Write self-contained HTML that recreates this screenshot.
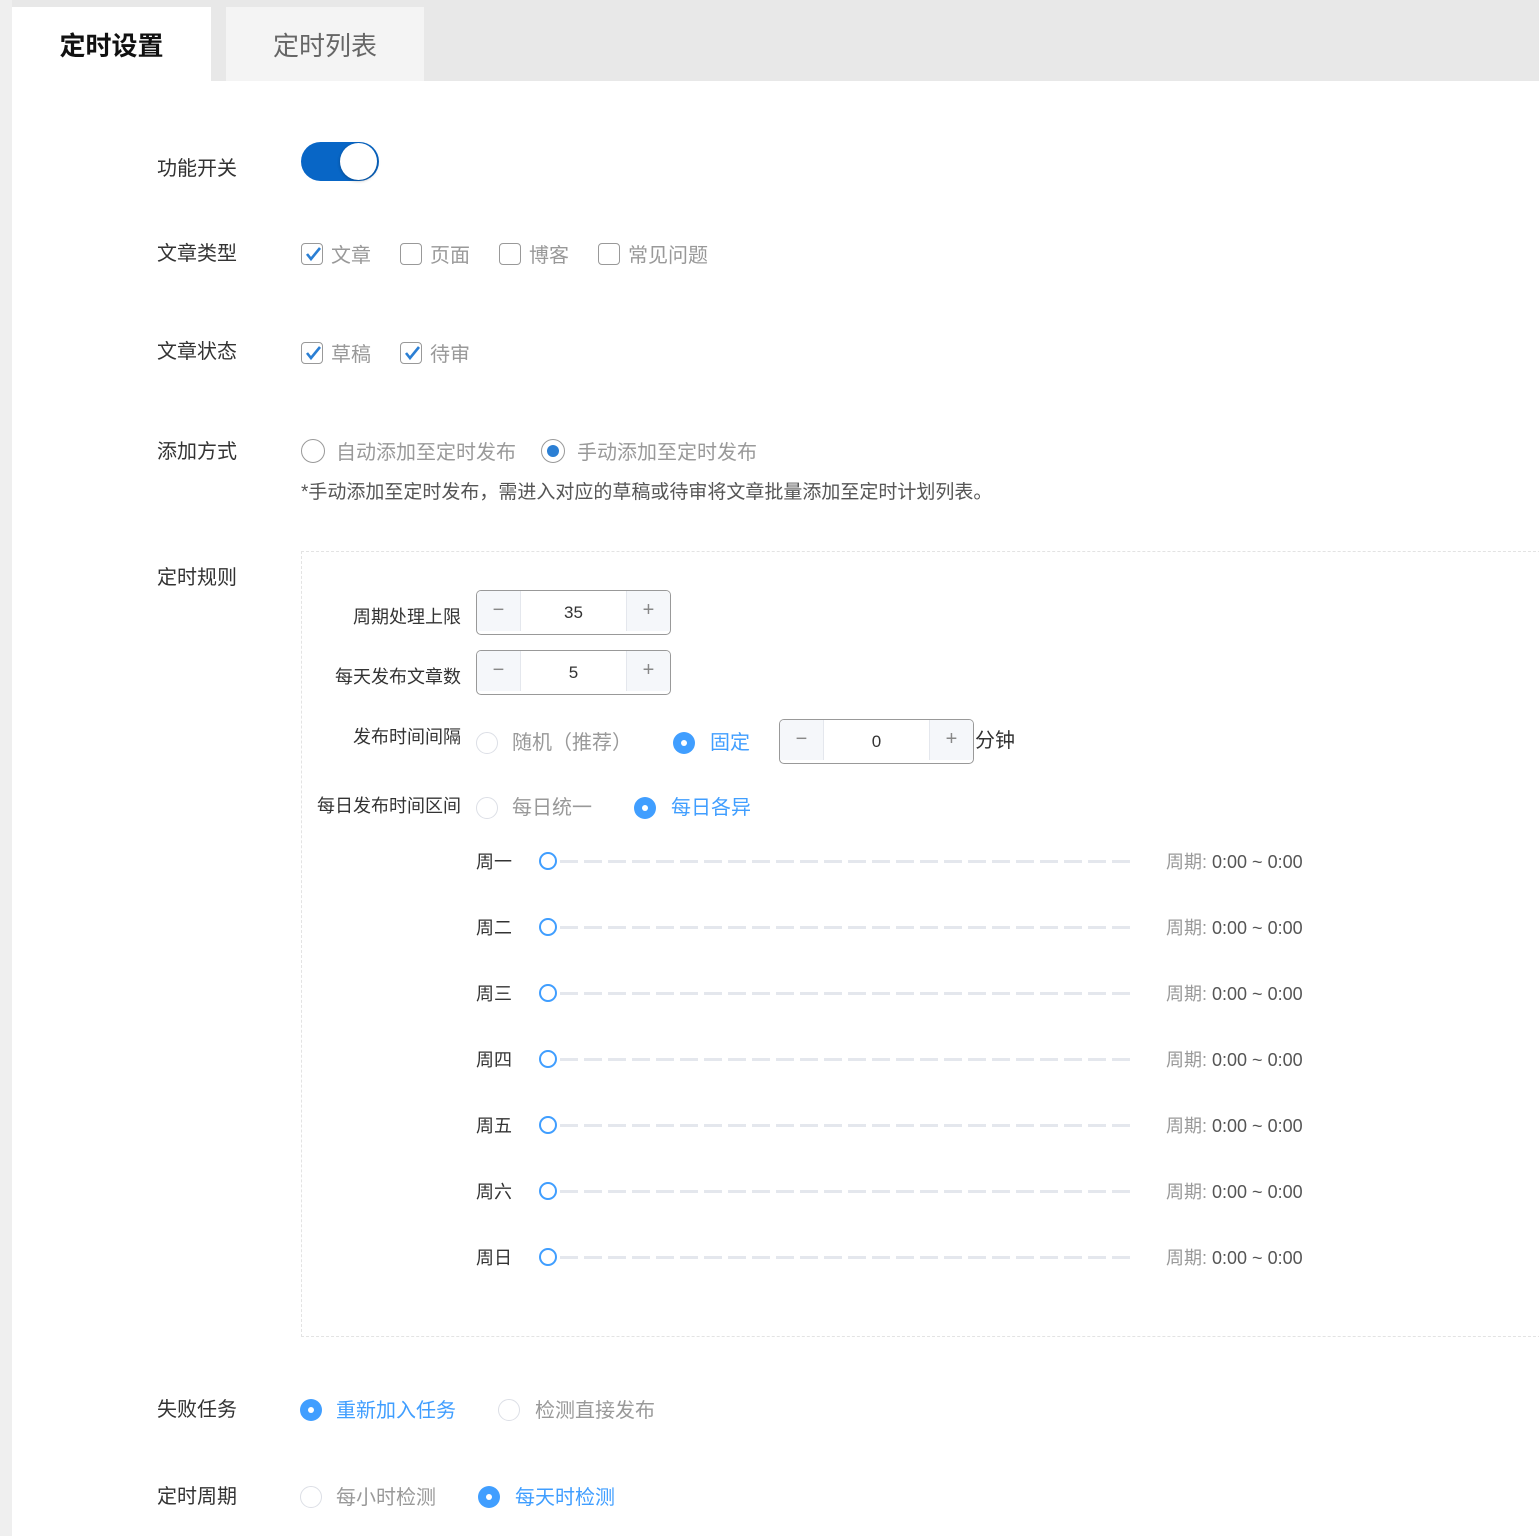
<!DOCTYPE html>
<html><head><meta charset="utf-8"><style>
*{margin:0;padding:0;box-sizing:border-box}
body{width:1539px;height:1536px;position:relative;background:#fff;font-family:"Liberation Sans","Noto Sans CJK SC",sans-serif;overflow:hidden;color:#333}
.a{position:absolute;white-space:nowrap}
.t{position:absolute;white-space:nowrap;height:30px;line-height:30px;margin-top:1px}
.lb{font-size:20px;color:#333;left:157px}
.cb{position:absolute;width:22px;height:22px;border:1.5px solid #999;border-radius:4px;background:#fff}
.g{color:#999;font-size:20px}
.bl{color:#409eff;font-size:20px}
.rd{position:absolute;width:22px;height:22px;border-radius:50%;border:1px solid #dcdfe6;background:#fff}
.rf{position:absolute;width:22px;height:22px;border-radius:50%;background:#409eff}
.rf:after{content:"";position:absolute;left:8px;top:8px;width:6px;height:6px;border-radius:50%;background:#fff}
.num{position:absolute;width:195px;height:45px;border:1.5px solid #999;border-radius:5px;background:#fff;overflow:hidden}
.num .m,.num .p{position:absolute;top:0;width:44px;height:40px;background:#f5f7fa;color:#888;font-size:20px;text-align:center;line-height:38px}
.num .m{left:0;border-right:1px solid #e4e7ed}.num .p{right:0;border-left:1px solid #e4e7ed}
.num .v{position:absolute;left:44px;right:44px;top:0;height:42px;line-height:44px;text-align:center;font-size:17px;color:#333}
.il{font-size:18px;color:#333;text-align:right;right:1078px}
.day{position:absolute;left:476px;font-size:18px;color:#333;height:24px;line-height:26px}
.dot{position:absolute;left:539px;width:18px;height:18px;border:2.5px solid #409eff;border-radius:50%;background:#fff}
.dash{position:absolute;left:560px;width:576px;height:3px;background:repeating-linear-gradient(90deg,#e4e7ed 0 18px,transparent 18px 24px)}
.per{position:absolute;left:1166px;font-size:18px;color:#999;height:24px;line-height:26px}
.per span{color:#555}
</style></head><body>
<div class="a" style="left:0;top:0;width:1539px;height:81px;background:#e8e8e8"></div>
<div class="a" style="left:0;top:0;width:12px;height:1536px;background:#efefef"></div>
<div class="a" style="left:12px;top:7px;width:199px;height:75px;background:#fff;font-size:26px;font-weight:bold;color:#111;text-align:center;line-height:78px">定时设置</div>
<div class="a" style="left:226px;top:7px;width:198px;height:74px;background:#f4f4f4;font-size:26px;color:#666;text-align:center;line-height:78px">定时列表</div>

<div class="t lb" style="top:153px">功能开关</div>
<div class="a" style="left:301px;top:142px;width:78px;height:39px;border-radius:20px;background:#0866c6"></div>
<div class="a" style="left:340px;top:143px;width:37px;height:37px;border-radius:50%;background:#fff;box-shadow:0 1px 3px rgba(0,0,0,.3)"></div>

<div class="t lb" style="top:238px">文章类型</div>
<div class="cb" style="left:301px;top:243px"></div>
<svg class="a" style="left:303px;top:244px" width="20" height="20"><path d="M4 10 L8 15 L17 4" stroke="#2b7fd4" stroke-width="2.6" fill="none"/></svg>
<div class="t g" style="left:331px;top:240px">文章</div>
<div class="cb" style="left:400px;top:243px"></div><div class="t g" style="left:430px;top:240px">页面</div>
<div class="cb" style="left:499px;top:243px"></div><div class="t g" style="left:529px;top:240px">博客</div>
<div class="cb" style="left:598px;top:243px"></div><div class="t g" style="left:628px;top:240px">常见问题</div>

<div class="t lb" style="top:336px">文章状态</div>
<div class="cb" style="left:301px;top:342px"></div>
<svg class="a" style="left:303px;top:343px" width="20" height="20"><path d="M4 10 L8 15 L17 4" stroke="#2b7fd4" stroke-width="2.6" fill="none"/></svg>
<div class="t g" style="left:331px;top:339px">草稿</div>
<div class="cb" style="left:400px;top:342px"></div>
<svg class="a" style="left:402px;top:343px" width="20" height="20"><path d="M4 10 L8 15 L17 4" stroke="#2b7fd4" stroke-width="2.6" fill="none"/></svg>
<div class="t g" style="left:430px;top:339px">待审</div>

<div class="t lb" style="top:436px">添加方式</div>
<div class="a" style="left:301px;top:439px;width:24px;height:24px;border-radius:50%;border:1.5px solid #999"></div>
<div class="t g" style="left:336px;top:437px">自动添加至定时发布</div>
<div class="a" style="left:541px;top:439px;width:24px;height:24px;border-radius:50%;border:1.5px solid #999"></div>
<div class="a" style="left:547px;top:445px;width:12px;height:12px;border-radius:50%;background:#2b7fd4"></div>
<div class="t g" style="left:577px;top:437px">手动添加至定时发布</div>
<div class="t" style="left:301px;top:477px;font-size:19px;color:#555">*手动添加至定时发布，需进入对应的草稿或待审将文章批量添加至定时计划列表。</div>

<div class="t lb" style="top:562px">定时规则</div>
<div class="a" style="left:301px;top:551px;width:1250px;height:786px;border:1px dashed #e3e3e3"></div>

<div class="t il" style="top:601px">周期处理上限</div>
<div class="num" style="left:476px;top:590px"><div class="m">−</div><div class="v">35</div><div class="p">+</div></div>
<div class="t il" style="top:661px">每天发布文章数</div>
<div class="num" style="left:476px;top:650px"><div class="m">−</div><div class="v">5</div><div class="p">+</div></div>

<div class="t il" style="top:721px">发布时间间隔</div>
<div class="rd" style="left:476px;top:732px"></div>
<div class="t g" style="left:512px;top:727px">随机（推荐）</div>
<div class="rf" style="left:673px;top:732px"></div>
<div class="t bl" style="left:710px;top:727px">固定</div>
<div class="num" style="left:779px;top:719px"><div class="m">−</div><div class="v">0</div><div class="p">+</div></div>
<div class="t" style="left:975px;top:725px;font-size:20px;color:#333">分钟</div>

<div class="t il" style="top:790px">每日发布时间区间</div>
<div class="rd" style="left:476px;top:797px"></div>
<div class="t g" style="left:512px;top:792px">每日统一</div>
<div class="rf" style="left:634px;top:797px"></div>
<div class="t bl" style="left:671px;top:792px">每日各异</div>

<div class="day" style="top:849px">周一</div><div class="dash" style="top:860px"></div><div class="dot" style="top:852px"></div><div class="per" style="top:849px">周期: <span>0:00 ~ 0:00</span></div>
<div class="day" style="top:915px">周二</div><div class="dash" style="top:926px"></div><div class="dot" style="top:918px"></div><div class="per" style="top:915px">周期: <span>0:00 ~ 0:00</span></div>
<div class="day" style="top:981px">周三</div><div class="dash" style="top:992px"></div><div class="dot" style="top:984px"></div><div class="per" style="top:981px">周期: <span>0:00 ~ 0:00</span></div>
<div class="day" style="top:1047px">周四</div><div class="dash" style="top:1058px"></div><div class="dot" style="top:1050px"></div><div class="per" style="top:1047px">周期: <span>0:00 ~ 0:00</span></div>
<div class="day" style="top:1113px">周五</div><div class="dash" style="top:1124px"></div><div class="dot" style="top:1116px"></div><div class="per" style="top:1113px">周期: <span>0:00 ~ 0:00</span></div>
<div class="day" style="top:1179px">周六</div><div class="dash" style="top:1190px"></div><div class="dot" style="top:1182px"></div><div class="per" style="top:1179px">周期: <span>0:00 ~ 0:00</span></div>
<div class="day" style="top:1245px">周日</div><div class="dash" style="top:1256px"></div><div class="dot" style="top:1248px"></div><div class="per" style="top:1245px">周期: <span>0:00 ~ 0:00</span></div>

<div class="t lb" style="top:1394px">失败任务</div>
<div class="rf" style="left:300px;top:1399px"></div>
<div class="t bl" style="left:336px;top:1395px">重新加入任务</div>
<div class="rd" style="left:498px;top:1399px"></div>
<div class="t g" style="left:535px;top:1395px">检测直接发布</div>

<div class="t lb" style="top:1481px">定时周期</div>
<div class="rd" style="left:300px;top:1486px"></div>
<div class="t g" style="left:336px;top:1482px">每小时检测</div>
<div class="rf" style="left:478px;top:1486px"></div>
<div class="t bl" style="left:515px;top:1482px">每天时检测</div>
</body></html>
